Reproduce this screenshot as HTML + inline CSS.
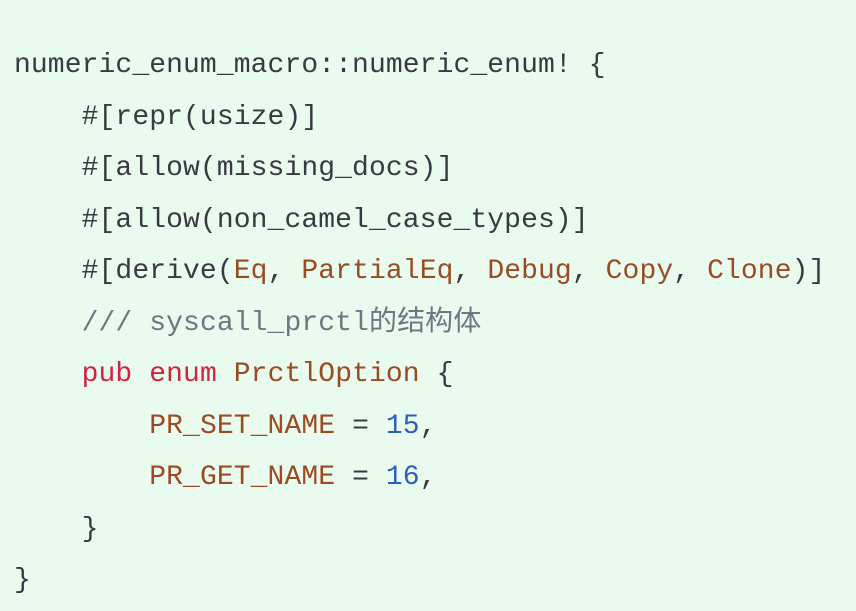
<!DOCTYPE html>
<html><head><meta charset="utf-8"><style>
html,body{margin:0;padding:0;}
body{width:856px;height:611px;background:#e9fbef;overflow:hidden;}
pre{margin:0;position:absolute;left:14px;top:40px;font-family:"Liberation Mono","Noto Sans CJK SC",monospace;font-size:28px;line-height:51.5px;color:#383a42;letter-spacing:0.1px;}
.b{color:#9a4b22}.r{color:#d0243c}.c{color:#6e7781}.n{color:#2e5fb8}
</style></head><body>
<pre>numeric_enum_macro::numeric_enum! {
    #[repr(usize)]
    #[allow(missing_docs)]
    #[allow(non_camel_case_types)]
    #[derive(<span class="b">Eq</span>, <span class="b">PartialEq</span>, <span class="b">Debug</span>, <span class="b">Copy</span>, <span class="b">Clone</span>)]
    <span class="c">/// syscall_prctl的结构体</span>
    <span class="r">pub</span> <span class="r">enum</span> <span class="b">PrctlOption</span> {
        <span class="b">PR_SET_NAME</span> = <span class="n">15</span>,
        <span class="b">PR_GET_NAME</span> = <span class="n">16</span>,
    }
}</pre>
</body></html>
